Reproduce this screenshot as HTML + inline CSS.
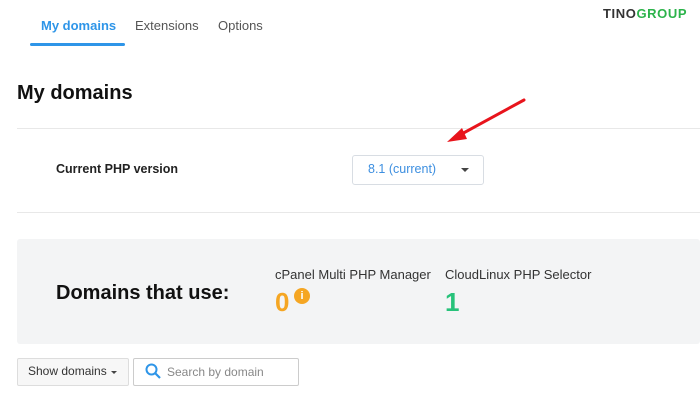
<!DOCTYPE html>
<html><head><style>
body{margin:0;width:700px;height:400px;background:#fff;font-family:"Liberation Sans",sans-serif;position:relative;overflow:hidden}
.a{position:absolute;white-space:nowrap}
</style></head><body>
<div class="a" style="left:41px;top:18px;font-size:13px;color:#2e95e8;font-weight:bold">My domains</div>
<div class="a" style="left:30px;top:43px;width:95px;height:3px;background:#2e95e8;border-radius:2px"></div>
<div class="a" style="left:135px;top:18px;font-size:13px;color:#555">Extensions</div>
<div class="a" style="left:218px;top:18px;font-size:13px;color:#555">Options</div>
<div class="a" style="left:603px;top:6px;font-size:13px;font-weight:bold;letter-spacing:0.6px"><span style="color:#333">TINO</span><span style="color:#2bb34a">GROUP</span></div>
<div class="a" style="left:17px;top:82px;font-size:20px;font-weight:bold;color:#111">My domains</div>
<div class="a" style="left:17px;top:128px;width:683px;height:1px;background:#e8e8e8"></div>
<div class="a" style="left:56px;top:162px;font-size:12.5px;font-weight:bold;color:#222">Current PHP version</div>
<div class="a" style="left:352px;top:155px;width:130px;height:28px;border:1px solid #d8dde3;border-radius:3px"></div>
<div class="a" style="left:368px;top:162px;font-size:12.5px;color:#3d8fe0">8.1 (current)</div>
<div class="a" style="left:461px;top:168px;width:0;height:0;border-left:4px solid transparent;border-right:4px solid transparent;border-top:4px solid #444"></div>
<svg class="a" style="left:0;top:0" width="700" height="400"><line x1="524" y1="100" x2="458" y2="136" stroke="#e8141c" stroke-width="3" stroke-linecap="round"/><polygon points="447,142 462,128 467,139" fill="#e8141c"/></svg>
<div class="a" style="left:17px;top:212px;width:683px;height:1px;background:#e8e8e8"></div>
<div class="a" style="left:17px;top:239px;width:683px;height:105px;background:#f3f4f5;border-radius:3px"></div>
<div class="a" style="left:56px;top:282px;font-size:20px;font-weight:bold;color:#111">Domains that use:</div>
<div class="a" style="left:275px;top:267px;font-size:13px;color:#333">cPanel Multi PHP Manager</div>
<div class="a" style="left:445px;top:267px;font-size:13px;color:#333">CloudLinux PHP Selector</div>
<div class="a" style="left:275px;top:287px;font-size:26px;font-weight:bold;color:#f5a623">0</div>
<div class="a" style="left:294px;top:288px;width:16px;height:16px;border-radius:50%;background:#f5a623;color:#fff;font-size:11px;font-weight:bold;text-align:center;line-height:16px">i</div>
<div class="a" style="left:445px;top:287px;font-size:26px;font-weight:bold;color:#27c27a">1</div>
<div class="a" style="left:17px;top:358px;width:110px;height:26px;background:#f7f7f7;border:1px solid #ddd;border-radius:2px"></div>
<div class="a" style="left:28px;top:364px;font-size:12px;color:#333">Show domains</div>
<div class="a" style="left:111px;top:371px;width:0;height:0;border-left:3px solid transparent;border-right:3px solid transparent;border-top:3px solid #444"></div>
<div class="a" style="left:133px;top:358px;width:164px;height:26px;border:1px solid #ccc;border-radius:2px"></div>
<svg class="a" style="left:145px;top:363px" width="16" height="16"><circle cx="6.5" cy="6.5" r="5" fill="none" stroke="#2e95e8" stroke-width="2"/><line x1="10" y1="10" x2="15" y2="15" stroke="#2e95e8" stroke-width="2.2"/></svg>
<div class="a" style="left:167px;top:365px;font-size:12px;color:#888">Search by domain</div>
</body></html>
